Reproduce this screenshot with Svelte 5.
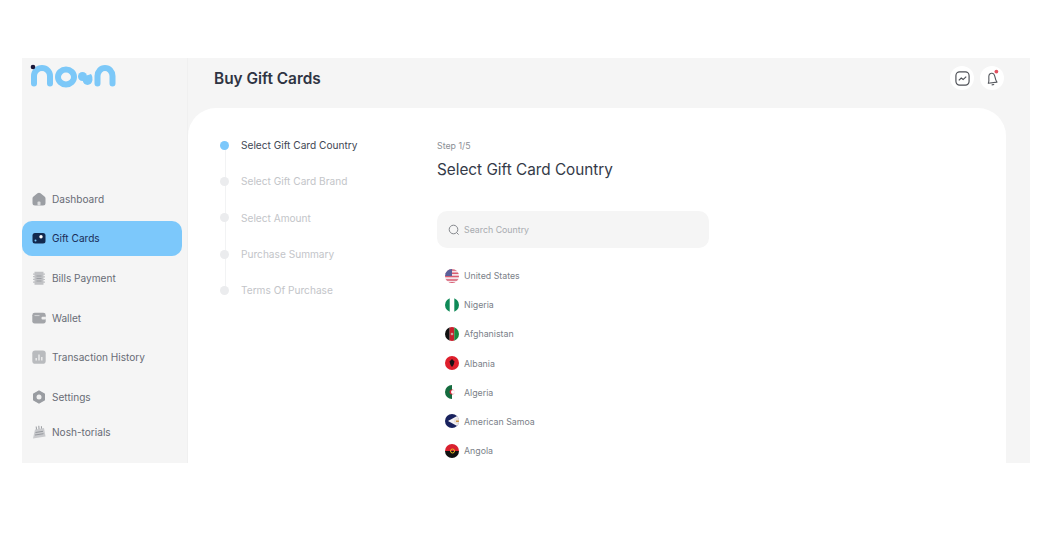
<script>
  const nav = [
    { label: 'Dashboard', icon: 'home', cls: 'n-dash' },
    { label: 'Gift Cards', icon: 'gift', cls: 'n-gift', active: true },
    { label: 'Bills Payment', icon: 'bill', cls: 'n-bill' },
    { label: 'Wallet', icon: 'wallet', cls: 'n-wallet' },
    { label: 'Transaction History', icon: 'chart', cls: 'n-hist' },
    { label: 'Settings', icon: 'gear', cls: 'n-set' },
    { label: 'Nosh-torials', icon: 'news', cls: 'n-tut' }
  ];
  const steps = ['Select Gift Card Country', 'Select Gift Card Brand', 'Select Amount', 'Purchase Summary', 'Terms Of Purchase'];
  const countries = ['United States', 'Nigeria', 'Afghanistan', 'Albania', 'Algeria', 'American Samoa', 'Angola'];
</script>

{#snippet navIcon(name)}
  <svg class="nav-icon" viewBox="0 0 14 14" aria-hidden="true">
    {#if name === 'home'}
      <path d="M.5 6.500C.5 5.500 1 4.800 1.800 4.200L5.500 1.300a2.400 2.400 0 0 1 3 0l3.700 2.900c.8.600 1.300 1.300 1.300 2.300V11a2.500 2.500 0 0 1-2.500 2.500h-8A2.500 2.500 0 0 1 .5 11Z" fill="#9b9ea3" />
      <rect x="5.500" y="9.500" width="3" height="4" rx="1" fill="#dcdddf" />
    {:else if name === 'gift'}
      <rect x="0.500" y="2" width="13" height="10.500" rx="2.500" fill="#12294f" />
      <circle cx="9" cy="5.800" r="1.700" fill="#fff" />
      <circle cx="3.500" cy="9.600" r="1" fill="#7cc8f8" />
    {:else if name === 'bill'}
      <path d="M2.500 .8h9v1.700H13v1.200h-1.500v1.500H13v1.200h-1.500v1.500H13v1.200h-1.500v1.500H13v1.200h-1.500v1.900h-9v-1.900H1v-1.200h1.500V8.900H1V7.700h1.500V6.200H1V5h1.500V3.700H1V2.500h1.500Z" fill="#c0c1c4" />
      <path d="M4.500 5h5M4.500 7.500h5M4.500 10h5" stroke="#989ba0" stroke-width=".9" />
    {:else if name === 'wallet'}
      <rect x="0.300" y="1.800" width="13.400" height="10.800" rx="2.400" fill="#a3a5a9" />
      <rect x="9.500" y="5.800" width="4.500" height="2.800" rx="1" fill="#f0f0f0" />
      <path d="M2.500 4.600h5" stroke="#d8d9da" stroke-width=".9" />
    {:else if name === 'chart'}
      <rect x="0.300" y="0.500" width="13.400" height="13.200" rx="2.800" fill="#b9bbbe" />
      <path d="M4.200 10.500V8M7 10.500V4.500M9.800 10.500V7" stroke="#eeeeee" stroke-width="1.400" />
    {:else if name === 'gear'}
      <path d="M7 1 12.300 4v6L7 13 1.700 10V4Z" fill="#999ca1" stroke="#999ca1" stroke-width="1.400" stroke-linejoin="round" />
      <circle cx="7" cy="7" r="2.500" fill="#efefef" />
    {:else}
      <path d="M3 4.500 12 3l1.500 8.500L1 13.500Z" fill="#c9cacd" />
      <path d="M3.500 7.500 11 6.300M3 10 11.500 8.700" stroke="#8f9297" stroke-width=".9" />
      <path d="M4.500 4.500 4.200 1.500M7 4 6.800 .8M9.500 3.600 9.400 1.200" stroke="#9a9da1" stroke-width="1" />
    {/if}
  </svg>
{/snippet}

{#snippet flag(name)}
  <svg class="flag" viewBox="0 0 14 14" aria-hidden="true">
    <defs><clipPath id={'c-' + name.replace(' ', '')}><circle cx="7" cy="7" r="7" /></clipPath></defs>
    <g clip-path={'url(#c-' + name.replace(' ', '') + ')'}>
      {#if name === 'United States'}
        <rect width="14" height="14" fill="#f3e4e8" />
        <path d="M0 1h14M0 4.300h14M0 7.600h14M0 10.900h14M0 13.800h14" stroke="#d95c72" stroke-width="1.500" />
        <rect width="7" height="7" fill="#59609a" />
      {:else if name === 'Nigeria'}
        <rect width="14" height="14" fill="#fff" />
        <rect width="4.700" height="14" fill="#0f8a57" />
        <rect x="9.300" width="4.700" height="14" fill="#0f8a57" />
      {:else if name === 'Afghanistan'}
        <rect width="4.700" height="14" fill="#111" />
        <rect x="4.700" width="4.700" height="14" fill="#c8202c" />
        <rect x="9.300" width="4.700" height="14" fill="#1b8a3e" />
        <circle cx="7" cy="7" r="1.300" fill="#c9a89c" />
      {:else if name === 'Albania'}
        <rect width="14" height="14" fill="#de1f2c" />
        <path d="M7 3 9.500 5.500 8.500 9 7 11 5.500 9 4.500 5.500Z" fill="#1a1216" />
      {:else if name === 'Algeria'}
        <rect width="7" height="14" fill="#146b3e" />
        <rect x="7" width="7" height="14" fill="#fff" />
        <circle cx="7" cy="7" r="2.500" fill="#d2283a" />
        <circle cx="8" cy="7" r="2" fill="#fff" />
      {:else if name === 'American Samoa'}
        <rect width="14" height="14" fill="#19225e" />
        <path d="M14 1 3 7l11 6Z" fill="#f4f2f4" />
        <path d="M14 2.400 9 5.400v3.200l5 3Z" fill="#e9e2df" />
        <path d="M11 6.500h3v1.500h-3Z" fill="#c9903e" />
      {:else}
        <rect width="14" height="7" fill="#d9202f" />
        <rect y="7" width="14" height="7" fill="#111" />
        <circle cx="7.500" cy="7" r="2" fill="none" stroke="#e8b820" stroke-width="1" />
      {/if}
    </g>
  </svg>
{/snippet}

<div class="page">
  <div class="panel">
    <aside class="sidebar">
      <svg class="logo" viewBox="0 0 86 26" role="img" aria-label="nosh">
        <g fill="none" stroke="#7cc8f8" stroke-width="6" stroke-linecap="round">
          <path d="M4 20.500V13a8 8 0 0 1 16 0v7.500" />
          <ellipse cx="36" cy="14" rx="8" ry="7.500" />
          <path d="M67.500 20.500V13a7.500 8 0 0 1 15 0v7.500" />
        </g>
        <g fill="#7cc8f8">
          <circle cx="52.500" cy="13.500" r="4.500" />
          <circle cx="57.500" cy="17.200" r="4.800" />
          <path d="M57 12.500 61 11c1.500 1.800 1.500 4 1.300 6H56Z" />
        </g>
        <circle cx="3" cy="4" r="2.300" fill="#1b1638" />
      </svg>
      <nav class="nav">
        {#each nav as item}
          <div class={['nav-item', item.cls, item.active && 'active']}>
            {@render navIcon(item.icon)}
            <span>{item.label}</span>
          </div>
        {/each}
      </nav>
    </aside>

    <main class="main">
      <header class="topbar">
        <h1>Buy Gift Cards</h1>
        <div class="actions">
          <span class="round">
            <svg viewBox="0 0 16 16" width="17" height="17" aria-hidden="true">
              <rect x="1.800" y="1.800" width="12.400" height="12.400" rx="3.500" fill="none" stroke="#4c4f55" stroke-width="1.100" />
              <path d="M4.500 9.800 6.800 7.500 8.600 9 11.500 6.200" fill="none" stroke="#4c4f55" stroke-width="1.100" />
            </svg>
          </span>
          <span class="round">
            <svg viewBox="0 0 16 16" width="20" height="20" aria-hidden="true">
              <g transform="rotate(-8 8 8)">
                <path d="M4.500 11.800c.8-1.200.9-2.400 1-4.200.1-2 1-3.400 2.500-3.400s2.400 1.400 2.500 3.400c.1 1.800.2 3 1 4.200Z" fill="none" stroke="#55585e" stroke-width=".9" stroke-linejoin="round" />
                <path d="M7 13.400h2" stroke="#55585e" stroke-width=".9" />
              </g>
              <circle cx="11.500" cy="2.800" r="1.500" fill="#e2505f" />
            </svg>
          </span>
        </div>
      </header>

      <section class="card">
        <ol class="steps">
          {#each steps as step, i}
            <li class={['step', i === 0 && 'current']}>
              <i class="dot"></i>
              <span>{step}</span>
            </li>
          {/each}
        </ol>

        <div class="content">
          <p class="count">Step 1/5</p>
          <h2>Select Gift Card Country</h2>
          <div class="search">
            <svg viewBox="0 0 12 12" width="12" height="12" aria-hidden="true">
              <circle cx="5.500" cy="5.500" r="4.300" fill="none" stroke="#777a80" stroke-width=".9" />
              <path d="M8.600 8.600 10.600 10.600" stroke="#777a80" stroke-width=".9" />
            </svg>
            <span>Search Country</span>
          </div>
          <ul class="countries">
            {#each countries as c}
              <li>{@render flag(c)}<span>{c}</span></li>
            {/each}
          </ul>
        </div>
      </section>
    </main>
  </div>
</div>

<style>
  :global(body) {
    margin: 0;
    background: #fff;
    font-family: Inter, "Noto Sans", "Liberation Sans", sans-serif;
  }
  .page {
    height: 553px;
    box-sizing: border-box;
    padding: 58px 9px 0 22px;
    overflow: hidden;
  }
  .panel {
    display: flex;
    height: 405px;
    background: #f5f5f5;
    overflow: hidden;
  }
  .sidebar {
    width: 166px;
    flex: none;
    box-sizing: border-box;
    border-right: 1px solid #f0f0f0;
  }
  .logo {
    display: block;
    width: 86px;
    height: 26px;
    margin: 5px 0 0 8px;
  }
  .nav {
    margin-top: 92px;
    width: 160px;
  }
  .nav-item {
    display: flex;
    align-items: center;
    gap: 6px;
    height: 35px;
    padding-left: 10px;
    margin-bottom: 4.700px;
    font-size: 10.100px;
    color: #686c76;
    border-radius: 10px;
    box-sizing: border-box;
  }
  .nav-item.active {
    background: #7cc8fb;
    color: #1a2d58;
  }
  .nav-item.n-tut {
    margin-top: -5px;
  }
  .nav-icon {
    width: 14px;
    height: 14px;
    flex: none;
  }
  .main {
    flex: 1;
    min-width: 0;
    display: flex;
    flex-direction: column;
  }
  .topbar {
    height: 50px;
    flex: none;
    display: flex;
    align-items: center;
    justify-content: space-between;
    padding: 0 26px 0 26px;
    box-sizing: border-box;
  }
  h1 {
    margin: 0;
    font-size: 15.400px;
    font-weight: 600;
    color: #2f3443;
    position: relative;
    top: -5px;
  }
  .actions {
    display: flex;
    gap: 4px;
    position: relative;
    top: -5px;
  }
  .round {
    width: 24px;
    height: 24px;
    border-radius: 50%;
    background: #fff;
    display: grid;
    place-items: center;
    margin-left: 2px;
  }
  .card {
    flex: 1;
    margin-right: 24px;
    background: #fff;
    border-radius: 28px 28px 0 0;
    display: flex;
    padding: 32px 0 0 32px;
    min-height: 0;
  }
  .steps {
    list-style: none;
    margin: 0;
    padding: 0;
    width: 217px;
    flex: none;
    position: relative;
  }
  .steps::before {
    content: '';
    position: absolute;
    left: 4.500px;
    top: 8px;
    height: 145px;
    width: 1px;
    background: #f2f3f4;
  }
  .step {
    display: flex;
    align-items: center;
    gap: 12px;
    height: 36.300px;
    margin-top: 0;
    font-size: 10.150px;
    color: #c3c5c9;
    position: relative;
    transform: translateY(-13px);
  }
  .step.current {
    color: #414754;
  }
  .dot {
    width: 9px;
    height: 9px;
    border-radius: 50%;
    background: #ebecee;
    flex: none;
  }
  .current .dot {
    background: #7cc8fb;
  }
  .content {
    flex: 1;
    min-width: 0;
  }
  .count {
    margin: 0;
    font-size: 8.800px;
    line-height: 12px;
    color: #8c8f96;
  }
  h2 {
    margin: 7px 0 0;
    font-size: 15.300px;
    line-height: 22px;
    font-weight: 400;
    color: #343a48;
  }
  .search {
    display: flex;
    align-items: center;
    gap: 4px;
    width: 272px;
    height: 37px;
    margin-top: 30px;
    padding-left: 11px;
    box-sizing: border-box;
    background: #f5f5f5;
    border-radius: 10px;
    font-size: 8.800px;
    color: #a8abb0;
  }
  .countries {
    list-style: none;
    margin: 13px 0 0;
    padding: 0 0 0 8px;
  }
  .countries li {
    display: flex;
    align-items: center;
    gap: 5px;
    height: 29.170px;
    font-size: 8.800px;
    color: #7b7f89;
  }
  .flag {
    width: 14px;
    height: 14px;
    flex: none;
  }
</style>
